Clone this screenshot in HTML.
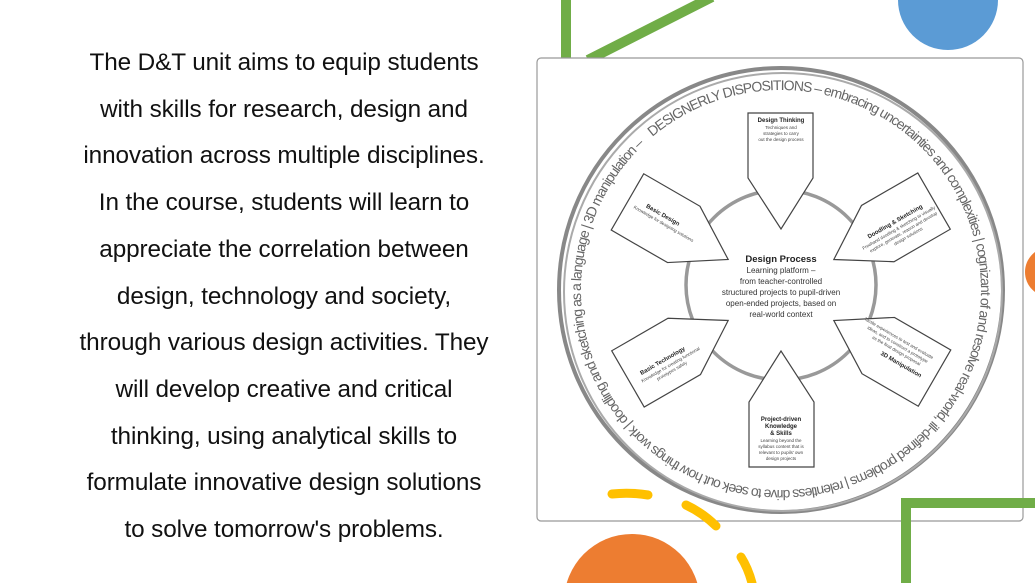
<!DOCTYPE html>
<html><head><meta charset="utf-8"><style>
html,body{margin:0;padding:0;background:#fff;width:1035px;height:583px;overflow:hidden;position:relative}
#t{position:absolute;left:34px;width:500px;top:40px;text-align:center;font-family:"Liberation Sans",sans-serif;font-size:24.3px;line-height:46.7px;color:#111;letter-spacing:-0.1px;white-space:nowrap}
svg{position:absolute;left:0;top:0}
</style></head><body>
<div id="t">The D&amp;T unit aims to equip students<br>with skills for research, design and<br>innovation across multiple disciplines.<br>In the course, students will learn to<br>appreciate the correlation between<br>design, technology and society,<br>through various design activities. They<br>will develop creative and critical<br>thinking, using analytical skills to<br>formulate innovative design solutions<br>to solve tomorrow's problems.</div>
<svg width="1035" height="583" viewBox="0 0 1035 583" font-family="Liberation Sans,sans-serif">
<defs>
<path id="ring" d="M781,290 m0,-200 a200,200 0 1,1 -0.1,0 z" transform="rotate(-40 781 290)"/>
<g id="pent"><path d="M748,113 H813 V178 L781,229 L748,178 Z" fill="#fff" stroke="#444" stroke-width="1.2"/></g>
</defs>
<rect x="561" y="0" width="10" height="60" fill="#70AD47"/>
<line x1="588" y1="60" x2="712" y2="-3" stroke="#70AD47" stroke-width="10"/>
<circle cx="948" cy="0" r="50" fill="#5B9BD5"/>
<circle cx="1050" cy="272" r="25" fill="#ED7D31"/>
<rect x="537" y="58" width="486" height="463" rx="4" fill="#fff" stroke="#999" stroke-width="1.2"/>
<circle cx="781" cy="290" r="222" fill="none" stroke="#888" stroke-width="4"/>
<circle cx="783" cy="292" r="219" fill="none" stroke="#aaa" stroke-width="2"/>
<circle cx="781" cy="285" r="95" fill="none" stroke="#999" stroke-width="3.5"/>
<text font-size="14" fill="#666"><textPath href="#ring" textLength="1245" lengthAdjust="spacing">DESIGNERLY DISPOSITIONS – embracing uncertainties and complexities | cognizant of and resolve real-world, ill-defined problems | relentless drive to seek out how things work | doodling and sketching as a language | 3D manipulation –</textPath></text>
<use href="#pent"/>
<use href="#pent" transform="rotate(60 781 290)"/>
<use href="#pent" transform="rotate(120 781 290)"/>
<use href="#pent" transform="rotate(180 781 290)"/>
<use href="#pent" transform="rotate(240 781 290)"/>
<use href="#pent" transform="rotate(300 781 290)"/>
<g font-size="4.5" fill="#444" text-anchor="middle">
<text x="781" y="122" font-size="6" font-weight="bold" fill="#222">Design Thinking</text>
<text x="781" y="129">Techniques and</text><text x="781" y="135">strategies to carry</text><text x="781" y="141">out the design process</text>
<text x="781" y="421" font-size="6" font-weight="bold" fill="#222">Project-driven</text>
<text x="781" y="428" font-size="6" font-weight="bold" fill="#222">Knowledge</text>
<text x="781" y="435" font-size="6" font-weight="bold" fill="#222">&amp; Skills</text>
<text x="781" y="442">Learning beyond the</text><text x="781" y="448">syllabus content that is</text><text x="781" y="454">relevant to pupils' own</text><text x="781" y="460">design projects</text>
<g transform="rotate(30 660 220)"><text x="660" y="216" font-size="6" font-weight="bold" fill="#222">Basic Design</text><text x="665" y="223">Knowledge for designing solutions</text></g>
<g transform="rotate(-30 900 230)"><text x="900" y="222" font-size="6" font-weight="bold" fill="#222">Doodling &amp; Sketching</text><text x="900" y="229">Freehand doodling &amp; sketching to visually</text><text x="902" y="235">explore, generate, reason and develop</text><text x="904" y="241">design solutions</text></g>
<g transform="rotate(-30 665 365)"><text x="665" y="362" font-size="6" font-weight="bold" fill="#222">Basic Technology</text><text x="670" y="369">Knowledge for creating functional</text><text x="668" y="375">prototypes safely</text></g>
<g transform="rotate(30 895 355)"><text x="905" y="362" font-size="6" font-weight="bold" fill="#222">3D Manipulation</text><text x="890" y="340">Tactile experiences to test and evaluate</text><text x="892" y="346">ideas, and to construct a prototype</text><text x="894" y="352">as the final design proposal</text></g>
<text x="781" y="262" font-size="9.5" font-weight="bold" fill="#222">Design Process</text>
<g font-size="8" fill="#333"><text x="781" y="273">Learning platform –</text><text x="781" y="284">from teacher-controlled</text><text x="781" y="295">structured projects to pupil-driven</text><text x="781" y="306">open-ended projects, based on</text><text x="781" y="317">real-world context</text></g>
</g>
<path d="M906,583 V503 H1035" fill="none" stroke="#70AD47" stroke-width="10"/>
<circle cx="632" cy="602" r="68" fill="#ED7D31"/>
<g stroke="#FFC000" stroke-width="9" stroke-linecap="round" fill="none">
<path d="M612,494 Q630,492 648,495"/>
<path d="M686,505 Q703,513 716,526"/>
<path d="M741,557 Q748,568 752,583"/>
</g>
</svg>
</body></html>
